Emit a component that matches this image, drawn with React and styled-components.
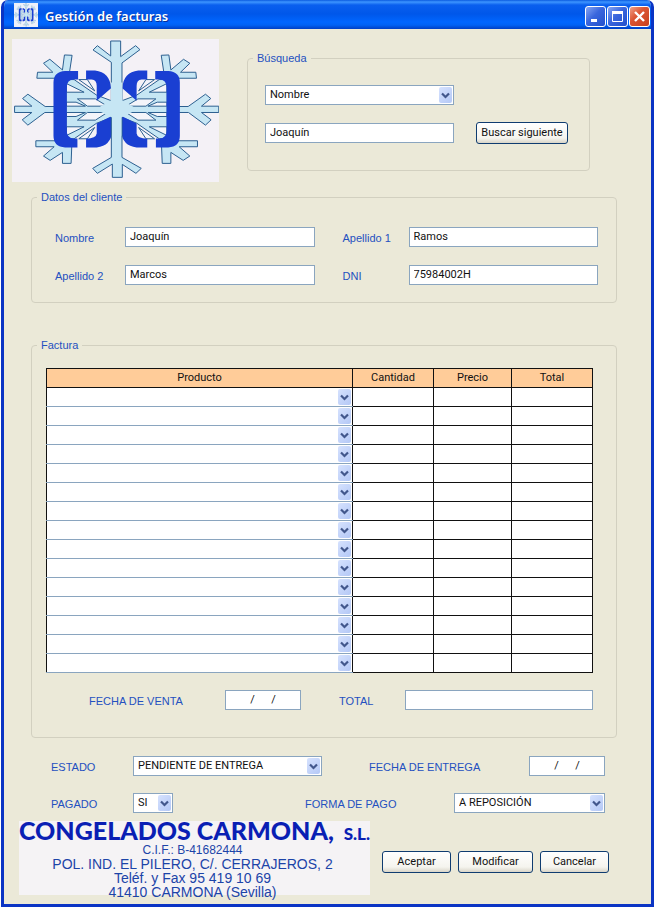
import React from "react";
import styled, { createGlobalStyle } from "styled-components";

const UI_FONT = 'Roboto, "Noto Sans", sans-serif';
const TITLE_FONT = '"Noto Sans", "Open Sans", sans-serif';
const LABEL_FONT = '"Liberation Sans", Arial, sans-serif';
const BORDER = "#8aa5bf";

const GlobalStyle = createGlobalStyle`
  *, *::before, *::after { box-sizing: border-box; }
  body { margin: 0; background: #fff; font: 11px/14px ${LABEL_FONT}; }
  input, select, button { margin: 0; font: 11px/14px ${UI_FONT}; color: #111; }
`;

const Window = styled.div`
  margin: 0 1px;
  border: solid #0a34c4;
  border-width: 0 3px 3px;
  border-radius: 7px 7px 0 0;
  background: #ebe9d8;
  overflow: hidden;
`;

const TitleBar = styled.header`
  display: flex;
  align-items: center;
  gap: 7px;
  height: 29px;
  margin: 0 -3px;
  padding: 0 4px 0 13px;
  background: linear-gradient(#0b5be0 0, #3d95ff 2px, #0a5fee 5px, #0057ea 14px, #0066ff 22px, #0062f5 25px, #003fc4 29px);
`;

const Title = styled.h1`
  flex: 1;
  margin: 3px 0 0;
  font: 600 13px/18px ${TITLE_FONT};
  color: #fff;
  text-shadow: 1px 1px 0 #0a2f96;
`;

const AppIcon = styled.svg`
  display: block;
  width: 24px;
  height: 24px;
  background: #eef1fa;
`;

const WindowButtons = styled.div`
  display: flex;
  gap: 1px;
  margin-top: 3px;
`;

const WindowButton = styled.button`
  display: grid;
  place-items: center;
  width: 21px;
  height: 21px;
  padding: 0;
  border: 1px solid #fff;
  border-radius: 3px;
  background: ${(p) =>
    p.$danger
      ? "linear-gradient(135deg, #f0a088, #dc5634 40%, #c8401c)"
      : "linear-gradient(135deg, #86a5f2, #3a66dd 45%, #2250cc)"};
`;

const Body = styled.main`
  padding: 10px 8px 9px;
`;

const TopRow = styled.div`
  display: grid;
  grid-template-columns: 207px 1fr;
  gap: 28px;
  padding-right: 53px;
`;

const Logo = styled.svg`
  display: block;
  width: 207px;
  height: 143px;
  background: #f4f1f6;
`;

const Group = styled.fieldset`
  min-width: 0;
  margin: ${(p) => p.$margin};
  padding: ${(p) => p.$padding};
  border: 1px solid #d2d0c0;
  border-radius: 4px;
`;

const Legend = styled.legend`
  margin-left: ${(p) => p.$indent};
  padding: 0 4px;
  line-height: 14px;
  color: #2450c0;
`;

const SearchGrid = styled.div`
  display: grid;
  grid-template-columns: 189px 92px;
  justify-content: start;
  align-items: center;
  gap: 17px 22px;
`;

const ClientGrid = styled.div`
  display: grid;
  grid-template-columns: 70px 1fr 94px 1fr;
  align-items: center;
  row-gap: 18px;
`;

const Label = styled.label`
  padding-left: ${(p) => p.$indent || "0"};
  padding-top: 1px;
  white-space: nowrap;
  color: #2450c0;
`;

const TextInput = styled.input`
  width: 100%;
  height: 20px;
  padding: 0 4px 2px;
  border: 1px solid ${BORDER};
  border-radius: 0;
  background: #fff;
  text-align: ${(p) => (p.$center ? "center" : "left")};
`;

const SelectBox = styled.span`
  position: relative;
  display: block;
  min-width: 0;
`;

const SelectField = styled.select`
  appearance: none;
  display: block;
  width: 100%;
  height: ${(p) => (p.$bare ? "18px" : "20px")};
  padding: 0 18px 0 4px;
  border: ${(p) => (p.$bare ? "0" : `1px solid ${BORDER}`)};
  border-radius: 0;
  background: #fff;
`;

const Arrow = styled.svg`
  position: absolute;
  top: ${(p) => (p.$bare ? "1px" : "2px")};
  right: ${(p) => (p.$bare ? "1px" : "2px")};
  width: 13px;
  height: 16px;
  border-radius: 2px;
  background: linear-gradient(135deg, #d6e2fe, #b4c8f6);
  pointer-events: none;
`;

const PushButton = styled.button`
  height: 22px;
  padding: 0 4px;
  border: 1px solid #0f3c70;
  border-radius: 3px;
  background: linear-gradient(#fff, #f5f4ee 75%, #d9d5c8);
  white-space: nowrap;
`;

const Table = styled.table`
  width: 100%;
  border-collapse: collapse;
  table-layout: fixed;
  background: #fff;
  border: 1px solid #111;
`;

const HeadCell = styled.th`
  width: ${(p) => p.$width};
  height: 19px;
  padding: 0;
  border: 1px solid #111;
  background: #ffcc99;
  font: 11px/14px ${UI_FONT};
  color: #111;
`;

const Cell = styled.td`
  height: 19px;
  padding: 0;
  border: 1px solid #111;
`;

const ProductCell = styled(Cell)`
  border-top-color: ${BORDER};
  border-bottom-color: ${BORDER};
`;

const TotalsRow = styled.div`
  display: grid;
  grid-template-columns: 136px 76px 104px 1fr;
  align-items: center;
  padding: 17px 0 0 43px;
`;

const StatusRow = styled.div`
  display: grid;
  grid-template-columns: ${(p) => p.$columns};
  align-items: center;
  margin: ${(p) => p.$top} 38px 0 39px;
`;

const Footer = styled.footer`
  display: flex;
  align-items: center;
  justify-content: space-between;
  margin: 8px 34px 0 7px;
`;

const CompanyCard = styled.address`
  width: 351px;
  height: 74px;
  background: #f5f3f5;
  font: normal 14px/14px ${LABEL_FONT};
  text-align: center;
  white-space: nowrap;
  color: #1c44a8;
`;

const CompanyName = styled.strong`
  display: flex;
  align-items: baseline;
  justify-content: space-between;
  font: 900 25px/18px Lato, sans-serif;
  color: #0a1fb4;
`;

const CompanySuffix = styled.span`
  font-size: 17px;
`;

const CompanyLine = styled.div`
  font-size: ${(p) => (p.$small ? "12px" : "14px")};
  padding-right: 4px;
`;

const Buttons = styled.div`
  display: grid;
  grid-template-columns: 69px 75px 69px;
  gap: 7px;
  padding-top: 7px;
`;

function HalfFlake() {
  return (
    <>
      <g fill="#c6e6f4" stroke="#2c5f90" strokeWidth="3">
        <path d="M43 316H95L67 293 83 280 135 317H165V335H134L83 373 66 357 95 335H43Z" />
        <path d="M112 214H158L130 187 149 175 187 207 193 162 216 163 208 215 180 245 165 232H110Z" />
        <path d="M107 438H162L130 466 150 479 187 455V488H213L215 436 180 410 165 420H107Z" />
        <path d="M198 236H222L290 283 335 300V350L290 367 222 414H198Z" />
      </g>
      <g fill="#f4f4fa" stroke="#2c5f90" strokeWidth="3">
        <path d="M199 248L252 274H199ZM199 304H228L256 316H199ZM199 335H256L228 347H199ZM199 378H252L199 404Z" />
        <path d="M232 294H286L322 316H262ZM232 358H286L322 335H262Z" />
        <path d="M236 236L284 270 262 236ZM236 414L284 380 262 414Z" />
      </g>
      <g fill="#1a3fd2">
        <path d="M234 210H195Q160 212 160 245V405Q160 438 195 440H232V413H222Q200 413 200 390V260Q200 236 222 236H234Z" />
        <path d="M258 209H285Q330 214 333 262L290 300V255Q290 237 275 236H258Z" />
        <path d="M258 440H290Q333 436 337 390V345L290 368V398Q288 412 258 414Z" />
      </g>
    </>
  );
}

function FlakeDrawing() {
  return (
    <>
      <HalfFlake />
      <g transform="matrix(-1 0 0 1 700 0)">
        <HalfFlake />
      </g>
      <path
        fill="#c6e6f4"
        stroke="#2c5f90"
        strokeWidth="3"
        d="M332 120H362V167L407 134 420 146 366 186V470L424 503 408 518 367 491V530H337V490L292 518 278 503 334 470V184L279 147 292 134 332 165Z"
      />
      <path fill="#c6e6f4" d="M300 318L333 298 333 245H367V298L400 318V332L364 350V405H336V350L300 332Z" />
    </>
  );
}

function Select({ options, bare, ...rest }) {
  return (
    <SelectBox>
      <SelectField $bare={bare} {...rest}>
        {options.map((o) => (
          <option key={o}>{o}</option>
        ))}
      </SelectField>
      <Arrow $bare={bare} viewBox="0 0 13 16" aria-hidden="true">
        <path d="M3 6.5L6.5 10 10 6.5" fill="none" stroke="#42578c" strokeWidth="2.2" />
      </Arrow>
    </SelectBox>
  );
}

const ROWS = Array.from({ length: 15 }, (_, i) => i + 1);

export default function App() {
  return (
    <>
      <GlobalStyle />
      <Window>
        <TitleBar>
          <AppIcon viewBox="36 114 621 430" preserveAspectRatio="none" aria-hidden="true">
            <FlakeDrawing />
          </AppIcon>
          <Title>Gestión de facturas</Title>
          <WindowButtons>
            <WindowButton aria-label="Minimizar">
              <svg width="13" height="13" viewBox="0 0 13 13">
                <path d="M2 10.5H8" stroke="#fff" strokeWidth="3" />
              </svg>
            </WindowButton>
            <WindowButton aria-label="Maximizar">
              <svg width="13" height="13" viewBox="0 0 13 13">
                <path d="M1.5 2V11.5H11.5V2" fill="none" stroke="#fff" />
                <path d="M1 2.5H12" stroke="#fff" strokeWidth="3" />
              </svg>
            </WindowButton>
            <WindowButton $danger aria-label="Cerrar">
              <svg width="13" height="13" viewBox="0 0 13 13">
                <path d="M2 2L11 11M11 2L2 11" stroke="#fff" strokeWidth="2.4" />
              </svg>
            </WindowButton>
          </WindowButtons>
        </TitleBar>
        <Body>
          <TopRow>
            <Logo viewBox="36 114 621 430" role="img" aria-label="Congelados Carmona">
              <FlakeDrawing />
            </Logo>
            <Group $margin="12px 0 11px" $padding="20px 17px 26px">
              <Legend $indent="-12px">Búsqueda</Legend>
              <SearchGrid>
                <Select aria-label="Campo de búsqueda" options={["Nombre"]} />
                <span />
                <TextInput aria-label="Texto de búsqueda" defaultValue="Joaquín" />
                <PushButton>Buscar siguiente</PushButton>
              </SearchGrid>
            </Group>
          </TopRow>

          <Group $margin="8px 26px 0 19px" $padding="23px 18px 17px 23px">
            <Legend $indent="-18px">Datos del cliente</Legend>
            <ClientGrid>
              <Label htmlFor="nombre">Nombre</Label>
              <TextInput id="nombre" defaultValue="Joaquín" />
              <Label htmlFor="ap1" $indent="28px">Apellido 1</Label>
              <TextInput id="ap1" defaultValue="Ramos" />
              <Label htmlFor="ap2">Apellido 2</Label>
              <TextInput id="ap2" defaultValue="Marcos" />
              <Label htmlFor="dni" $indent="28px">DNI</Label>
              <TextInput id="dni" defaultValue="75984002H" />
            </ClientGrid>
          </Group>

          <Group $margin="35px 26px 0 19px" $padding="16px 23px 27px 14px">
            <Legend $indent="-9px">Factura</Legend>
            <Table>
              <thead>
                <tr>
                  <HeadCell scope="col">Producto</HeadCell>
                  <HeadCell scope="col" $width="81px">Cantidad</HeadCell>
                  <HeadCell scope="col" $width="78px">Precio</HeadCell>
                  <HeadCell scope="col" $width="81px">Total</HeadCell>
                </tr>
              </thead>
              <tbody>
                {ROWS.map((n) => (
                  <tr key={n}>
                    <ProductCell>
                      <Select bare aria-label={`Producto ${n}`} options={[""]} />
                    </ProductCell>
                    <Cell />
                    <Cell />
                    <Cell />
                  </tr>
                ))}
              </tbody>
            </Table>
            <TotalsRow>
              <Label htmlFor="venta">FECHA DE VENTA</Label>
              <TextInput id="venta" $center defaultValue="/      /" />
              <Label htmlFor="total" $indent="38px">TOTAL</Label>
              <TextInput id="total" />
            </TotalsRow>
          </Group>

          <StatusRow $top="18px" $columns="82px 1fr 207px 76px">
            <Label htmlFor="estado">ESTADO</Label>
            <Select id="estado" options={["PENDIENTE DE ENTREGA"]} />
            <Label htmlFor="entrega" $indent="47px">FECHA DE ENTREGA</Label>
            <TextInput id="entrega" $center defaultValue="/      /" />
          </StatusRow>
          <StatusRow $top="17px" $columns="82px 40px 281px 1fr">
            <Label htmlFor="pagado">PAGADO</Label>
            <Select id="pagado" options={["SI"]} />
            <Label htmlFor="forma" $indent="132px">FORMA DE PAGO</Label>
            <Select id="forma" options={["A REPOSICIÓN"]} />
          </StatusRow>

          <Footer>
            <CompanyCard>
              <CompanyName>
                CONGELADOS CARMONA, <CompanySuffix>S.L.</CompanySuffix>
              </CompanyName>
              <CompanyLine $small>C.I.F.: B-41682444</CompanyLine>
              <CompanyLine>POL. IND. EL PILERO, C/. CERRAJEROS, 2</CompanyLine>
              <CompanyLine>Teléf. y Fax 95 419 10 69</CompanyLine>
              <CompanyLine>41410 CARMONA (Sevilla)</CompanyLine>
            </CompanyCard>
            <Buttons>
              <PushButton>Aceptar</PushButton>
              <PushButton>Modificar</PushButton>
              <PushButton>Cancelar</PushButton>
            </Buttons>
          </Footer>
        </Body>
      </Window>
    </>
  );
}
